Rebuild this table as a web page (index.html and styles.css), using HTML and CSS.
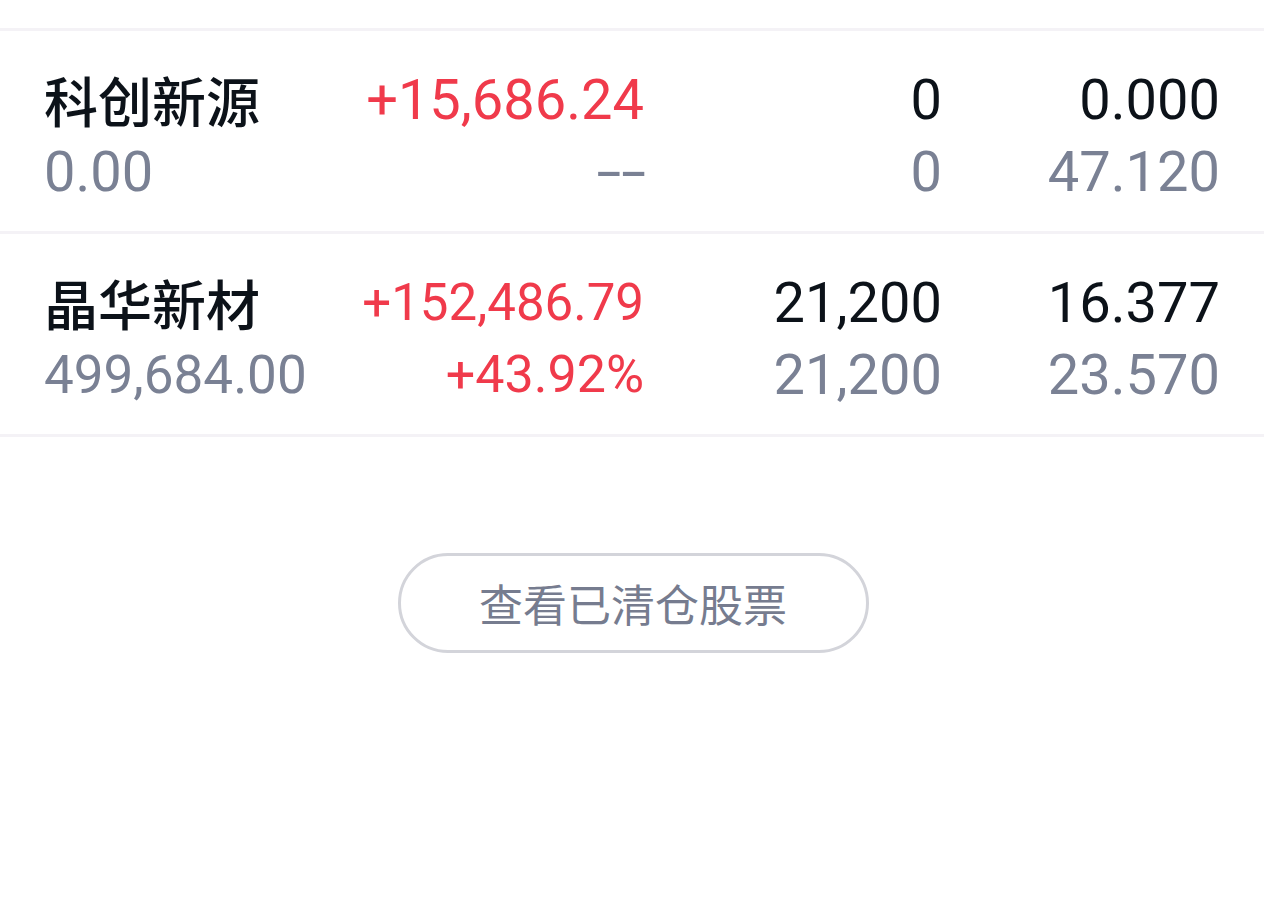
FILE: index.html
```html
<!DOCTYPE html>
<html lang="zh-CN">
<head>
<meta charset="utf-8">
<title>持仓</title>
<link rel="stylesheet" href="styles.css">
</head>
<body>
<div class="page">
  <div class="list">
    <div class="row">
      <div class="cell name">
        <div class="top cjk">科创新源</div>
        <div class="sub">0.00</div>
      </div>
      <div class="cell num">
        <div class="top red">+15,686.24</div>
        <div class="sub"><span class="dash">--</span></div>
      </div>
      <div class="cell num">
        <div class="top">0</div>
        <div class="sub">0</div>
      </div>
      <div class="cell num">
        <div class="top">0.000</div>
        <div class="sub">47.120</div>
      </div>
    </div>
    <div class="row">
      <div class="cell name">
        <div class="top cjk">晶华新材</div>
        <div class="sub fit-53">499,684.00</div>
      </div>
      <div class="cell num">
        <div class="top red fit-51">+152,486.79</div>
        <div class="sub red fit-52">+43.92%</div>
      </div>
      <div class="cell num">
        <div class="top">21,200</div>
        <div class="sub">21,200</div>
      </div>
      <div class="cell num">
        <div class="top">16.377</div>
        <div class="sub">23.570</div>
      </div>
    </div>
  </div>
  <div class="actions">
    <button class="cleared-btn">查看已清仓股票</button>
  </div>
</div>
</body>
</html>
```
FILE: styles.css
```css
html, body {
  margin: 0;
  padding: 0;
  background: #ffffff;
}
body {
  font-family: Roboto, "Noto Sans CJK SC", sans-serif;
  color: #0d1117;
}
.page {
  padding-top: 28px;
}
.list {
  border-top: 3px solid #f4f2f6;
}
.row {
  display: grid;
  grid-template-columns: 300px 300px 298px 1fr;
  padding: 33px 44px 0 44px;
  height: 203px;
  box-sizing: border-box;
  border-bottom: 3px solid #f4f2f6;
}
.cell {
  display: flex;
  flex-direction: column;
}
.num {
  align-items: flex-end;
}
.top, .sub {
  font-size: 56px;
  line-height: 72px;
  height: 72px;
  white-space: nowrap;
}
.top {
  color: #0c1219;
}
.sub {
  color: #7a8194;
}
.red {
  color: #f03a4b;
}
.fit-51 {
  font-size: 51px;
}
.fit-52 {
  font-size: 52px;
}
.fit-53 {
  font-size: 53px;
}
.dash {
  display: inline-block;
  transform: scaleX(1.6);
  transform-origin: right center;
  margin-right: -2px;
}
.cjk {
  font-family: "Noto Sans CJK SC", sans-serif;
  font-size: 54px;
  font-weight: 500;
}
.actions {
  display: flex;
  justify-content: center;
  padding-top: 116px;
}
.cleared-btn {
  width: 471px;
  height: 100px;
  box-sizing: border-box;
  border: 3px solid #d3d4da;
  border-radius: 50px;
  background: #ffffff;
  font-family: "Noto Sans CJK SC", sans-serif;
  font-size: 44px;
  color: #767c8f;
  padding: 0;
  margin-left: 2px;
}
```
